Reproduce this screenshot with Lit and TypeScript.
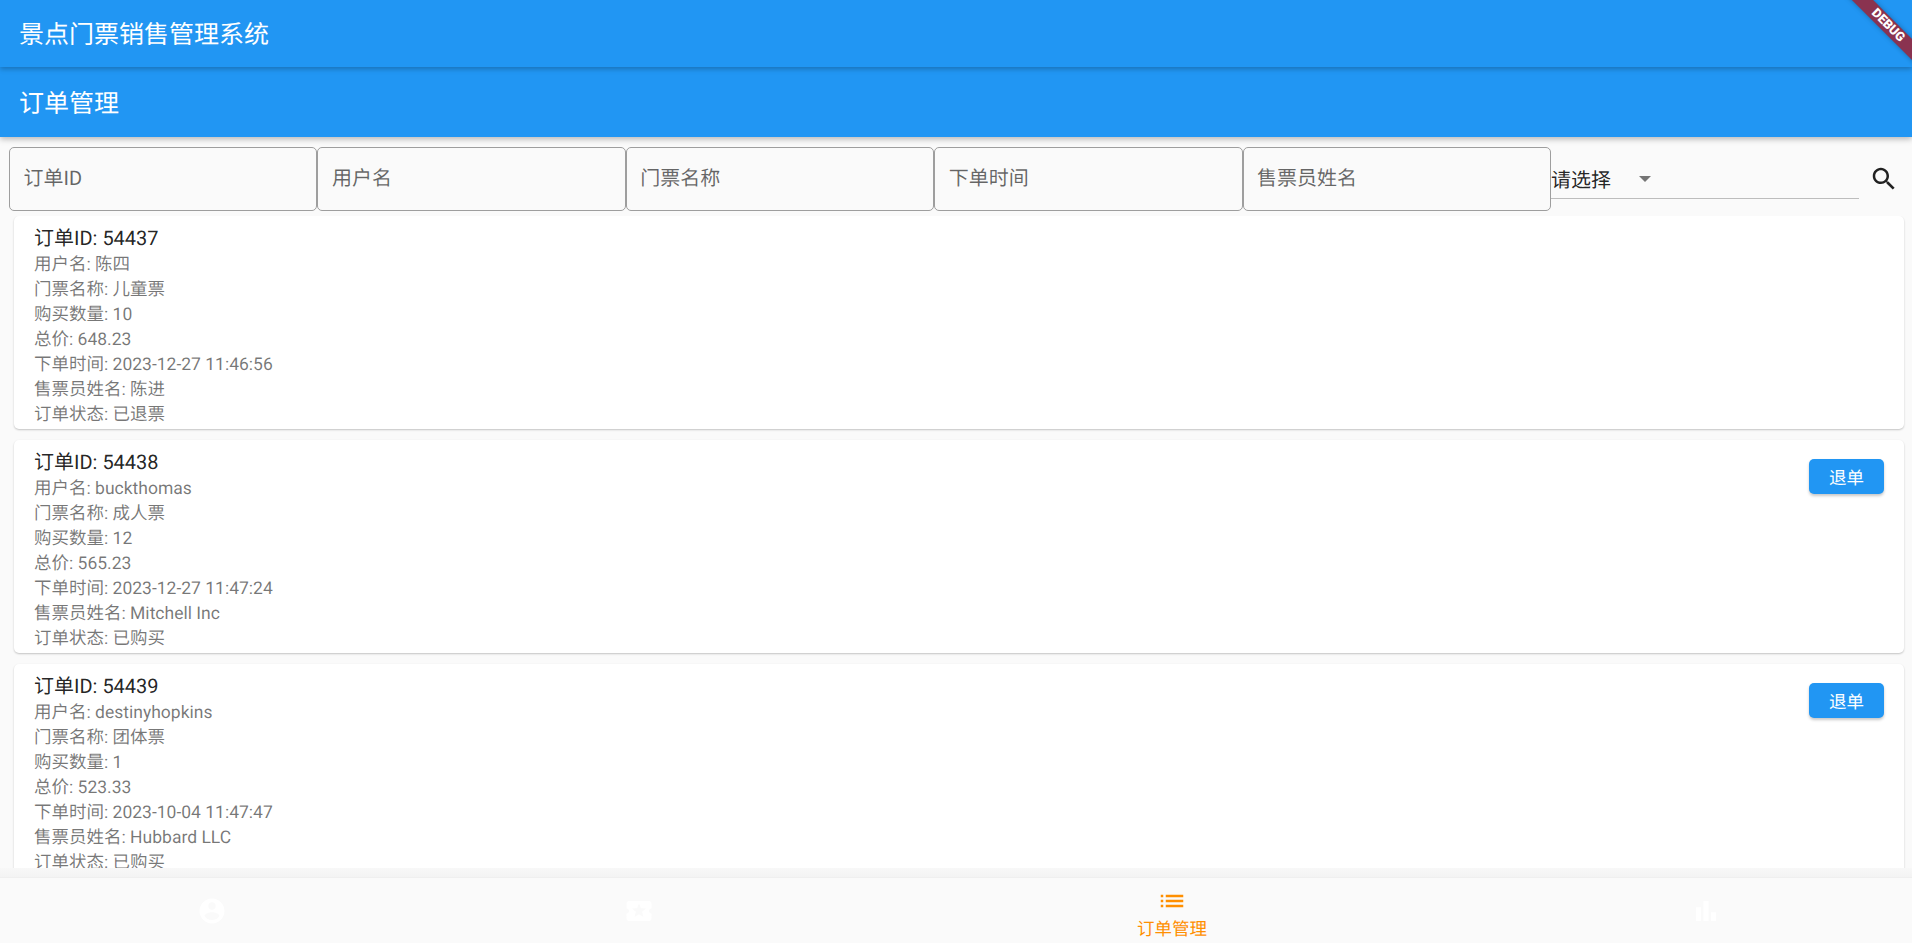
import { LitElement, html, css, svg } from "lit";
import { customElement } from "lit/decorators.js";

const orders = [
  { id: "54437", user: "陈四", ticket: "儿童票", qty: "10", total: "648.23", time: "2023-12-27 11:46:56", seller: "陈进", status: "已退票", refund: false },
  { id: "54438", user: "buckthomas", ticket: "成人票", qty: "12", total: "565.23", time: "2023-12-27 11:47:24", seller: "Mitchell Inc", status: "已购买", refund: true },
  { id: "54439", user: "destinyhopkins", ticket: "团体票", qty: "1", total: "523.33", time: "2023-10-04 11:47:47", seller: "Hubbard LLC", status: "已购买", refund: true },
];
const icon = (d: string) => svg`<svg viewBox="0 0 24 24" width="30" height="30" fill="currentColor"><path d=${d}></path></svg>`;
const P = {
  account: "M12 2C6.48 2 2 6.48 2 12s4.48 10 10 10 10-4.48 10-10S17.52 2 12 2zm0 3c1.66 0 3 1.34 3 3s-1.34 3-3 3-3-1.34-3-3 1.34-3 3-3zm0 14.2c-2.5 0-4.71-1.28-6-3.22.03-1.99 4-3.08 6-3.08 1.99 0 5.97 1.09 6 3.08-1.29 1.94-3.5 3.22-6 3.22z",
  ticket: "M20 12c0-1.1.9-2 2-2V6c0-1.1-.9-2-2-2H4c-1.1 0-1.99.9-1.99 2v4c1.1 0 1.99.9 1.99 2s-.89 2-2 2v4c0 1.1.9 2 2 2h16c1.1 0 2-.9 2-2v-4c-1.1 0-2-.9-2-2zm-4.42 4.8L12 14.5l-3.58 2.3 1.08-4.12-3.29-2.69 4.24-.25L12 5.8l1.54 3.95 4.24.25-3.29 2.69 1.09 4.11z",
  list: "M3 13h2v-2H3v2zm0 4h2v-2H3v2zm0-8h2V7H3v2zm4 4h14v-2H7v2zm0 4h14v-2H7v2zM7 7v2h14V7H7z",
  bars: "M4 9h4v11H4zm12 4h4v7h-4zm-6-9h4v16h-4z",
  search: "M15.5 14h-.79l-.28-.27C15.41 12.59 16 11.11 16 9.5 16 5.91 13.09 3 9.5 3S3 5.91 3 9.5 5.91 16 9.5 16c1.61 0 3.09-.59 4.23-1.57l.27.28v.79l5 4.99L20.49 19l-4.99-5zm-6 0C7.01 14 5 11.99 5 9.5S7.01 5 9.5 5 14 7.01 14 9.5 11.99 14 9.5 14z",
};

@customElement("app-root")
export class AppRoot extends LitElement {
  static styles = css`
    :host {
      display: flex;
      flex-direction: column;
      position: relative;
      width: 1912px;
      height: 943px;
      overflow: hidden;
      background: #fafafa;
      font-family: Roboto, "Noto Sans CJK SC", sans-serif;
      color: rgba(0, 0, 0, 0.87);
      text-rendering: geometricPrecision;
    }
    .bar {
      flex: none;
      display: flex;
      align-items: center;
      padding-left: 19px;
      background: #2196f3;
      color: #fff;
      font-size: 25px;
      position: relative;
    }
    .bar1 { height: 67px; padding-bottom: 2px; box-sizing: border-box; box-shadow: 0 2px 5px rgba(0, 0, 0, 0.25); z-index: 2; }
    .bar2 { height: 70px; box-shadow: 0 2px 6px rgba(0, 0, 0, 0.28); z-index: 1; }
    .filters {
      flex: none;
      display: flex;
      align-items: flex-start;
      padding: 10px 0 0 9px;
      height: 79px;
      box-sizing: border-box;
    }
    .field {
      flex: none;
      width: 308.4px;
      height: 64px;
      box-sizing: border-box;
      border: 1.25px solid #9e9e9e;
      border-radius: 5px;
      display: flex;
      align-items: center;
      padding: 0 0 5px 13.5px;
      font-size: 20px;
      color: rgba(0, 0, 0, 0.6);
    }
    .select {
      flex: none;
      width: 308px;
      height: 52px;
      box-sizing: border-box;
      border-bottom: 1.25px solid #bdbdbd;
      display: flex;
      align-items: center;
      font-size: 20px;
      padding-top: 11px;
    }
    .select span { width: 88px; }
    .caret {
      width: 0;
      height: 0;
      border-left: 6.5px solid transparent;
      border-right: 6.5px solid transparent;
      border-top: 6.5px solid #757575;
      margin-top: 1px;
    }
    .search { display: flex; margin: 16.5px 0 0 10px; color: rgba(0, 0, 0, 0.87); }
    .list {
      flex: none;
      height: 652px;
      overflow: hidden;
      padding: 0 8px 0 14px;
    }
    .card {
      height: 213px;
      margin-bottom: 11px;
      background: #fff;
      border-radius: 5px;
      box-shadow: 0 1px 2px rgba(0, 0, 0, 0.22);
      display: flex;
      justify-content: space-between;
      padding: 8px 20px;
      box-sizing: border-box;
    }
    .title { font-size: 20px; line-height: 29px; }
    .sub { font-size: 17.5px; line-height: 25px; color: rgba(0, 0, 0, 0.54); }
    .btn {
      flex: none;
      align-self: flex-start;
      margin-top: 11px;
      width: 75px;
      height: 35px;
      padding-top: 2px;
      box-sizing: border-box;
      border-radius: 5px;
      background: #2196f3;
      color: #fff;
      font-size: 17.5px;
      display: flex;
      align-items: center;
      justify-content: center;
      box-shadow: 0 2px 3px rgba(0, 0, 0, 0.22);
    }
    .gap {
      flex: none;
      height: 9px;
      background: linear-gradient(#f8f8f8, #f3f3f3);
    }
    .nav {
      flex: 1;
      display: grid;
      grid-template-columns: 424px 429px 638px 1fr;
      background: #fafafa;
      border-top: 1px solid #efefef;
      position: relative;
    }
    .item {
      display: flex;
      flex-direction: column;
      align-items: center;
      justify-content: center;
      color: #fff;
    }
    .item.last { padding-left: 9px; }
    .item.on { color: #ff8f00; justify-content: flex-start; padding-top: 8px; font-size: 17.5px; }
    .item.on span { line-height: 24px; margin-top: 2px; }
    .ribbon {
      position: absolute;
      top: 18px;
      right: -41px;
      width: 130px;
      height: 15px;
      transform: rotate(45deg);
      background: #8a3350;
      box-shadow: 0 0 5px rgba(0, 0, 0, 0.3);
      color: #fff;
      font: 900 12.75px/15px Roboto, sans-serif;
      text-align: center;
      z-index: 5;
    }
  `;

  render() {
    return html`
      <div class="bar bar1">景点门票销售管理系统</div>
      <div class="bar bar2">订单管理</div>
      <div class="filters">
        ${["订单ID", "用户名", "门票名称", "下单时间", "售票员姓名"].map((t) => html`<div class="field">${t}</div>`)}
        <div class="select"><span>请选择</span><i class="caret"></i></div>
        <div class="search">${icon(P.search)}</div>
      </div>
      <div class="list">
        ${orders.map(
          (o) => html`<div class="card">
            <div>
              <div class="title">订单ID: ${o.id}</div>
              <div class="sub">用户名: ${o.user}</div>
              <div class="sub">门票名称: ${o.ticket}</div>
              <div class="sub">购买数量: ${o.qty}</div>
              <div class="sub">总价: ${o.total}</div>
              <div class="sub">下单时间: ${o.time}</div>
              <div class="sub">售票员姓名: ${o.seller}</div>
              <div class="sub">订单状态: ${o.status}</div>
            </div>
            ${o.refund ? html`<div class="btn">退单</div>` : ""}
          </div>`
        )}
      </div>
      <div class="gap"></div>
      <div class="nav">
        <div class="item">${icon(P.account)}</div>
        <div class="item">${icon(P.ticket)}</div>
        <div class="item on">${icon(P.list)}<span>订单管理</span></div>
        <div class="item last">${icon(P.bars)}</div>
      </div>
      <div class="ribbon">DEBUG</div>
    `;
  }
}
